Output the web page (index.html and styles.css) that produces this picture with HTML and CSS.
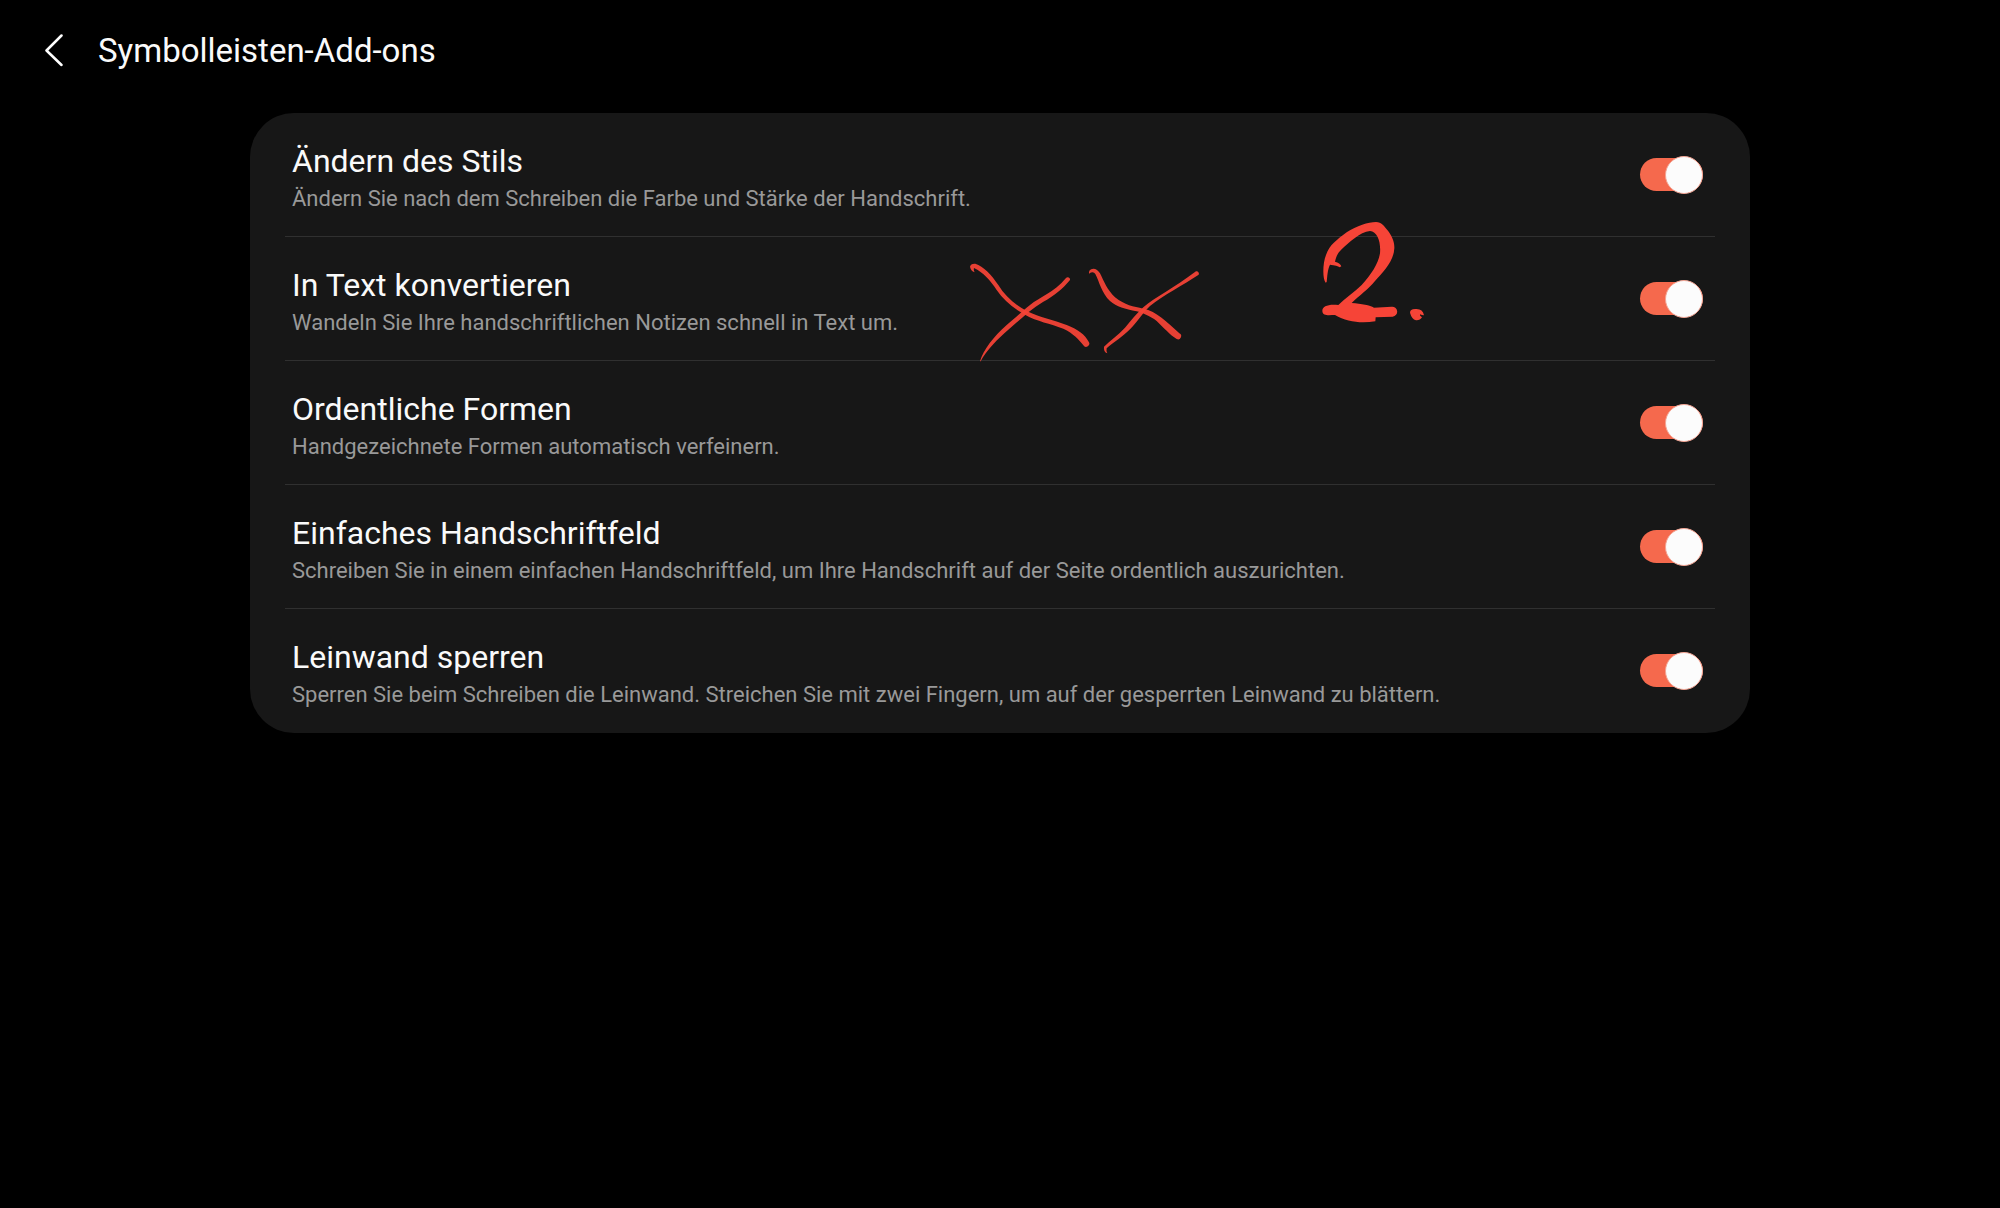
FILE: index.html
```html
<!DOCTYPE html>
<html lang="de">
<head>
    <meta charset="UTF-8">
    <meta name="viewport" content="width=device-width, initial-scale=1.0">
    <title>Symbolleisten-Add-ons</title>
    <link rel="stylesheet" href="styles.css">
</head>
<body>
    <header>
        <button class="back" type="button" aria-label="Zurück">
            <svg width="20" height="34" viewBox="0 0 20 34" fill="none" stroke="#fff" stroke-width="2.5" stroke-linecap="round" stroke-linejoin="round">
                <path d="M17.500 1.500 2.500 16.500l15 14.500"/>
            </svg>
        </button>
        <h1>Symbolleisten-Add-ons</h1>
    </header>

    <main class="card">
        <div class="row">
            <label for="style">
                <span class="title">Ändern des Stils</span>
                <span class="text">Ändern Sie nach dem Schreiben die Farbe und Stärke der Handschrift.</span>
            </label>
            <input class="switch" type="checkbox" id="style" checked>
        </div>
        <div class="row">
            <label for="convert">
                <span class="title">In Text konvertieren</span>
                <span class="text">Wandeln Sie Ihre handschriftlichen Notizen schnell in Text um.</span>
            </label>
            <input class="switch" type="checkbox" id="convert" checked>
        </div>
        <div class="row">
            <label for="shapes">
                <span class="title">Ordentliche Formen</span>
                <span class="text">Handgezeichnete Formen automatisch verfeinern.</span>
            </label>
            <input class="switch" type="checkbox" id="shapes" checked>
        </div>
        <div class="row">
            <label for="pad">
                <span class="title">Einfaches Handschriftfeld</span>
                <span class="text">Schreiben Sie in einem einfachen Handschriftfeld, um Ihre Handschrift auf der Seite ordentlich auszurichten.</span>
            </label>
            <input class="switch" type="checkbox" id="pad" checked>
        </div>
        <div class="row">
            <label for="lock">
                <span class="title">Leinwand sperren</span>
                <span class="text">Sperren Sie beim Schreiben die Leinwand. Streichen Sie mit zwei Fingern, um auf der gesperrten Leinwand zu blättern.</span>
            </label>
            <input class="switch" type="checkbox" id="lock" checked>
        </div>

        <!-- pen strokes over the list -->
        <svg class="ink" width="480" height="150" viewBox="0 0 1440 450" aria-hidden="true">
            <g class="cross" transform="translate(-30 75)">
                <path d="M74 97Q62 92 60 80Q62 70 76 71C100 78 125 105 145 135C165 168 195 195 230 213C270 232 310 240 350 255C385 268 405 285 416 305A9 9 0 0 1 400 316C388 300 370 280 340 266C300 250 262 245 225 224C190 205 160 180 140 150C120 120 100 98 72 84Q70 90 74 97Z"/>
                <path d="M90 364C100 330 130 290 170 255C200 230 215 215 240 195C270 170 310 160 348 114A7 7 0 0 1 360 120C340 145 310 170 280 185C240 208 210 240 180 265C140 300 110 330 92 364Z"/>
                <path d="M417 101Q415 88 430 86Q442 86 450 100C462 125 472 150 495 172C525 196 550 200 580 206C620 214 650 245 688 280A9 9 0 0 1 680 297C660 285 640 262 620 243C600 228 575 218 560 214C525 207 500 200 480 183C455 160 448 125 436 102Q430 92 417 101Z"/>
                <path d="M472 340Q460 335 462 320C480 302 505 285 525 263C545 240 560 220 580 202C615 172 670 145 738 94A7 7 0 0 1 746 104C700 135 640 165 600 198C575 222 560 248 540 268C520 288 490 308 470 325Q468 332 472 340Z"/>
            </g>
            <g class="digit" transform="translate(990 -45)">
                <path d="M107 248C97 235 98 190 108 165C118 135 140 120 170 97C200 78 235 66 258 66C275 66 282 78 290 88C305 105 314 125 313 145C311 185 280 215 255 243C235 268 210 285 185 309C215 311 240 316 252 323L305 320A15 15 0 0 1 308 350L257 352L256 364C215 370 170 367 135 345C120 345 98 350 97 333C97 318 115 312 145 315C165 295 195 275 215 255C245 222 265 190 270 160C273 125 262 95 240 93C210 95 175 130 155 148C142 160 138 172 135 185Q150 188 154 199L149 202Q142 196 120 194C112 210 112 230 110 246Z"/>
                <path d="M360 338Q360 326 378 327Q398 326 402 346Q396 346 390 343Q388 348 396 352Q390 362 378 361Q365 357 360 338Z"/>
            </g>
        </svg>
    </main>
</body>
</html>
```
FILE: styles.css
```css
body {
    margin: 0;
    background-color: #000;
    color: #fafafa;
    font-family: Roboto, sans-serif;
}

header {
    display: flex;
    align-items: center;
    gap: 34px;
    padding: 30px 44px;
}

header h1 {
    margin: 0;
    font-size: 33px;
    font-weight: 400;
    line-height: 42px;
}

.back {
    display: flex;
    padding: 0;
    border: none;
    background: none;
    cursor: pointer;
}

.card {
    position: relative;
    box-sizing: border-box;
    width: 75%;
    margin: 11px auto 0;
    padding: 0 35px;
    background-color: #171717;
    border-radius: 44px;
}

.row {
    display: flex;
    align-items: center;
    justify-content: space-between;
    padding: 0 12px 0 7px;
    border-bottom: 1px solid #303030;
}

.row:last-of-type {
    border-bottom-color: transparent;
}

.row label {
    padding: 29px 0 23px;
}

.title,
.text {
    display: block;
}

.title {
    margin-bottom: 4px;
    font-size: 32px;
    line-height: 38px;
}

.text {
    color: #999;
    font-size: 22px;
    line-height: 29px;
}

.switch {
    appearance: none;
    display: flex;
    align-items: center;
    justify-content: flex-end;
    flex-shrink: 0;
    width: 63px;
    height: 33px;
    margin: 0;
    border-radius: 17px;
    background-color: #f5694d;
    cursor: pointer;
}

.switch::before {
    content: "";
    flex-shrink: 0;
    width: 36px;
    height: 36px;
    border: 1px solid #f3a594;
    border-radius: 50%;
    background-color: #fcfcfc;
}

.switch:not(:checked) {
    justify-content: flex-start;
    background-color: #555;
}

.ink {
    position: absolute;
    top: 102px;
    left: 710px;
    pointer-events: none;
}

.cross {
    fill: #f44336;
    fill-opacity: 0.94;
}

.digit {
    fill: #f64437;
}
```
